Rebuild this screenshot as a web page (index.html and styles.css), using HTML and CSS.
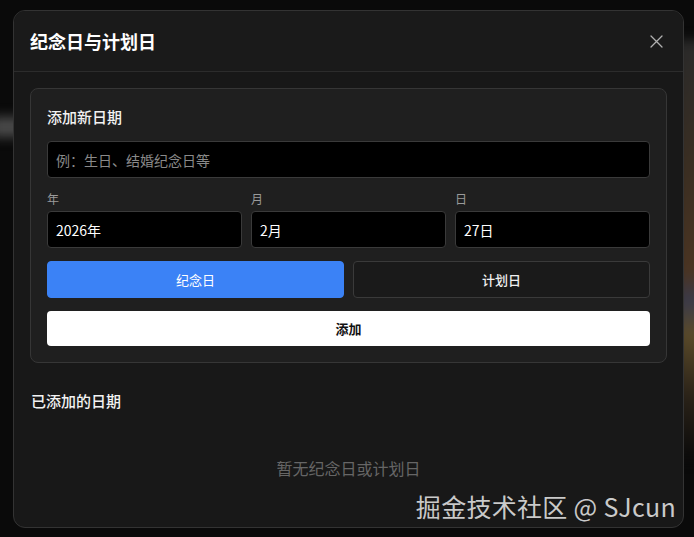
FILE: index.html
```html
<!DOCTYPE html>
<html lang="zh-CN">
<head>
    <meta charset="UTF-8">
    <meta name="viewport" content="width=device-width, initial-scale=1.0">
    <title>纪念日与计划日</title>
    <link rel="stylesheet" href="styles.css">
</head>
<body>

<div class="backdrop">
    <span class="blur blur-left"></span>
    <span class="blur blur-right"></span>
</div>

<div class="modal">
    <!-- Header -->
    <div class="modal-header">
        <h2>纪念日与计划日</h2>
        <button class="close-btn" aria-label="关闭">
            <svg width="13" height="13" viewBox="0 0 13 13">
                <path d="M1 1L12 12M12 1L1 12" stroke="#b0b0b0" stroke-width="1.3" stroke-linecap="round"/>
            </svg>
        </button>
    </div>

    <div class="modal-body">
        <!-- Add form -->
        <div class="card">
            <h3>添加新日期</h3>
            <input type="text" class="field" placeholder="例：生日、结婚纪念日等">

            <div class="date-row">
                <div class="date-col">
                    <label>年</label>
                    <div class="field value">2026年</div>
                </div>
                <div class="date-col">
                    <label>月</label>
                    <div class="field value">2月</div>
                </div>
                <div class="date-col">
                    <label>日</label>
                    <div class="field value">27日</div>
                </div>
            </div>

            <div class="type-row">
                <button class="type-btn active">纪念日</button>
                <button class="type-btn">计划日</button>
            </div>

            <button class="add-btn">添加</button>
        </div>

        <!-- List -->
        <h3 class="list-title">已添加的日期</h3>
        <p class="empty">暂无纪念日或计划日</p>
    </div>
</div>

<div class="watermark">掘金技术社区 @ SJcun</div>

</body>
</html>
```

FILE: styles.css
```css
/* Page */
* {
    box-sizing: border-box;
}

body {
    margin: 0;
    height: 537px;
    overflow: hidden;
    font-family: "Noto Sans CJK SC", "Noto Sans", sans-serif;
    background: #0a0a0a;
    position: relative;
    padding: 10px 10px 0 13px;
}

/* Blurred page behind the modal */
.backdrop {
    position: absolute;
    inset: 0;
    overflow: hidden;
}

.blur {
    position: absolute;
    filter: blur(6px);
}

.blur-left {
    left: -10px;
    top: 117px;
    width: 40px;
    height: 20px;
    background: #4a4a4a;
}

.blur-right {
    right: -20px;
    top: 40px;
    width: 40px;
    height: 420px;
    background: linear-gradient(#2a2a2a, #3a2e22 30%, #4a3422 55%, #3a3a4a 62%, #5a4a2a 70%, #2a2218 85%, #0a0a0a);
}

/* Modal */
.modal {
    position: relative;
    width: 671px;
    height: 518px;
    background: #181818;
    border: 1px solid #333;
    border-radius: 12px;
    overflow: hidden;
}

.modal-header {
    display: flex;
    justify-content: space-between;
    align-items: center;
    height: 61px;
    padding: 0 17px 0 16px;
    border-bottom: 1px solid #2c2c2c;
    background: #1a1a1a;
}

.modal-header h2 {
    margin: 0;
    font-size: 18px;
    font-weight: 700;
    color: #fff;
}

.close-btn {
    background: none;
    border: none;
    padding: 0;
    width: 20px;
    height: 20px;
    display: flex;
    align-items: center;
    justify-content: center;
    cursor: pointer;
}

.modal-body {
    padding: 16px;
}

/* Form card */
.card {
    background: #1f1f1f;
    border: 1px solid #363636;
    border-radius: 8px;
    padding: 16px;
}

.card h3 {
    margin: 0 0 12px;
    font-size: 15px;
    line-height: 24px;
    font-weight: 500;
    color: #f2f2f2;
}

.field {
    display: flex;
    align-items: center;
    width: 100%;
    height: 37px;
    padding: 0 8px;
    background: #000;
    border: 1px solid #3a3a3a;
    border-radius: 4px;
    font-family: inherit;
    font-size: 14px;
    color: #fff;
    outline: none;
}

.field::placeholder {
    color: #8a8a8a;
}

.date-row {
    display: grid;
    grid-template-columns: 1fr 1fr 1fr;
    gap: 9px;
    margin-top: 12px;
}

.date-col label {
    display: block;
    font-size: 12px;
    line-height: 18px;
    color: #9a9a9a;
    margin-bottom: 3px;
}

.type-row {
    display: grid;
    grid-template-columns: 1fr 1fr;
    gap: 9px;
    margin-top: 13px;
}

.type-btn {
    height: 37px;
    border: 1px solid #3a3a3a;
    border-radius: 4px;
    background: #1a1a1a;
    color: #f0f0f0;
    font-family: inherit;
    font-size: 13px;
    font-weight: 500;
    cursor: pointer;
}

.type-btn.active {
    background: #3b82f6;
    border-color: #3b82f6;
    color: #fff;
    font-weight: 400;
}

.add-btn {
    display: block;
    width: 100%;
    height: 35px;
    margin-top: 13px;
    border: none;
    border-radius: 4px;
    background: #fff;
    color: #111;
    font-family: inherit;
    font-size: 13px;
    font-weight: 700;
    cursor: pointer;
}

/* Added dates */
.list-title {
    margin: 26px 0 0 1px;
    font-size: 15px;
    line-height: 24px;
    font-weight: 500;
    color: #f2f2f2;
}

.empty {
    margin: 44px 0 0;
    text-align: center;
    font-size: 16px;
    line-height: 22px;
    color: #666;
}

/* Site watermark */
.watermark {
    position: absolute;
    right: 18px;
    bottom: 13px;
    font-size: 25px;
    color: rgba(235, 235, 235, 0.85);
    letter-spacing: 0.3px;
}
```
